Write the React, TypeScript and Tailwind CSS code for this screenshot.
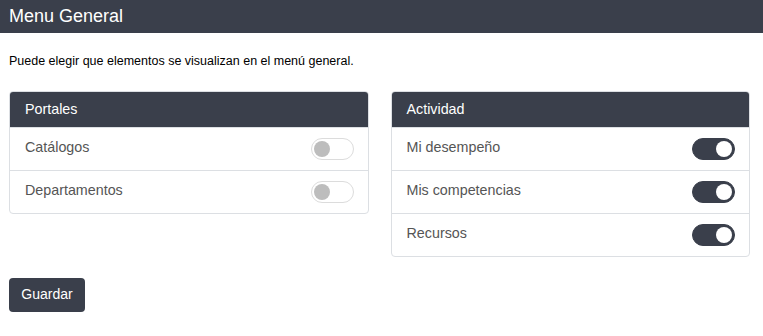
import { useState } from "react";

type Item = { label: string; on: boolean };

function Toggle({ on, onClick }: { on: boolean; onClick: () => void }) {
  return (
    <button
      type="button"
      onClick={onClick}
      className={`flex h-[22px] w-[43px] items-center rounded-full border px-[2px] ${
        on ? "justify-end border-[#3a3f4b] bg-[#3a3f4b]" : "justify-start border-[#dcdcdc] bg-white"
      }`}
    >
      <span className={`h-[16px] w-[16px] rounded-full ${on ? "bg-white" : "bg-[#bdbdbd]"}`} />
    </button>
  );
}

function Card({ title, initial }: { title: string; initial: Item[] }) {
  const [items, setItems] = useState(initial);
  return (
    <div className="overflow-hidden rounded-[4px] border border-[#dcdfe3]">
      <div className="flex h-[35px] items-center bg-[#3a3f4b] px-[15px] text-[14.3px] text-white">{title}</div>
      {items.map((it, i) => (
        <div
          key={it.label}
          className="flex h-[43px] items-center justify-between border-t border-[#dcdfe3] pl-[15px] pr-[14px] text-[14.3px] text-[#555]"
        >
          <span className="-mt-[3px]">{it.label}</span>
          <Toggle
            on={it.on}
            onClick={() => setItems(items.map((x, j) => (j === i ? { ...x, on: !x.on } : x)))}
          />
        </div>
      ))}
    </div>
  );
}

export default function App() {
  return (
    <div className="min-h-[336px] bg-white font-[family-name:'Liberation_Sans',Arial,sans-serif]">
      <div className="flex h-[33px] items-center bg-[#3a3f4b] px-[9px] text-[18px] text-white">Menu General</div>
      <p className="mt-[19px] px-[9px] text-[12.5px] text-black">
        Puede elegir que elementos se visualizan en el menú general.
      </p>
      <div className="mt-[20px] grid grid-cols-2 items-start gap-[22px] pl-[9px] pr-[13px]">
        <Card
          title="Portales"
          initial={[
            { label: "Catálogos", on: false },
            { label: "Departamentos", on: false },
          ]}
        />
        <Card
          title="Actividad"
          initial={[
            { label: "Mi desempeño", on: true },
            { label: "Mis competencias", on: true },
            { label: "Recursos", on: true },
          ]}
        />
      </div>
      <div className="mt-[21px] px-[9px]">
        <button type="button" className="h-[34px] w-[76px] rounded-[4px] bg-[#3a3f4b] text-[14px] text-white">
          Guardar
        </button>
      </div>
    </div>
  );
}
